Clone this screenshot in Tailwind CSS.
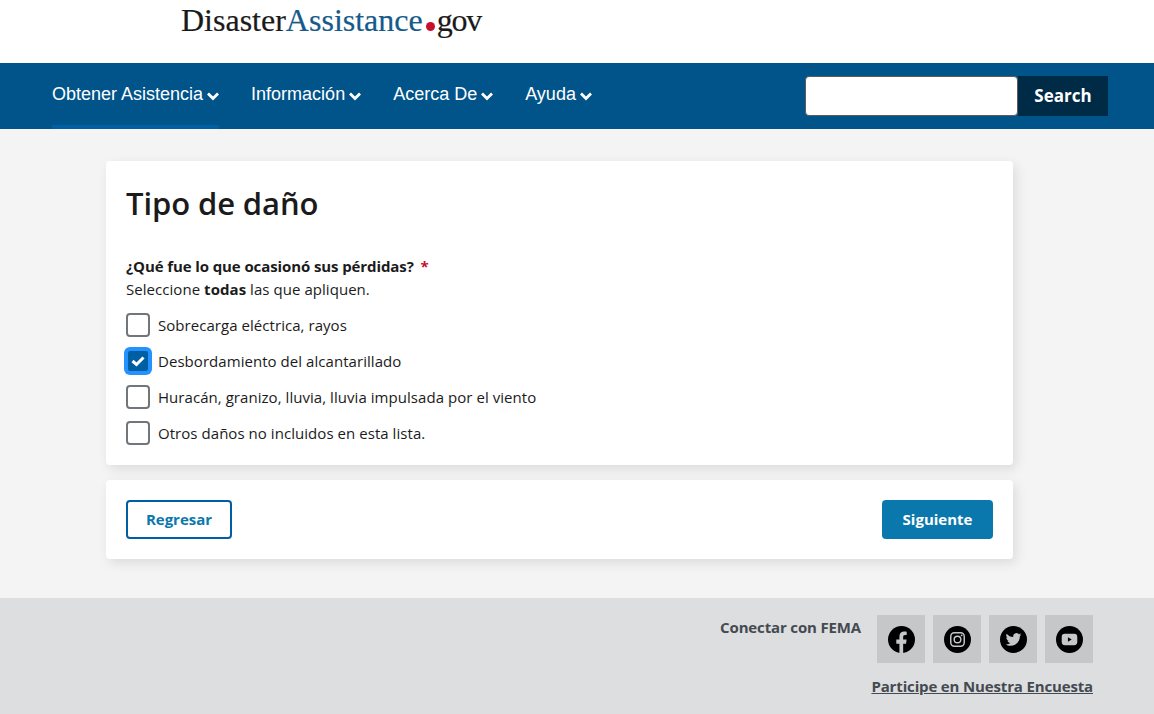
<!DOCTYPE html>
<html lang="es">
<head>
    <meta charset="UTF-8">
    <title>Tipo de daño</title>
    <script src="https://cdn.jsdelivr.net/npm/@tailwindcss/browser@4"></script>
</head>
<body class="h-[714px] overflow-hidden bg-[#f4f4f4] font-['Open_Sans',sans-serif] text-[#1b1b1b]">
    <!-- Logo -->
    <header class="h-[63px] bg-white pl-[181px] pt-[2px]">
        <div class="font-['Liberation_Serif',serif] text-[32px] leading-[36px] flex items-baseline [-webkit-text-stroke:0.2px]">
            <span class="text-[#1a1a1a]">Disaster</span><span class="text-[#155a8a]">Assistance</span><span class="w-[9px] h-[9px] rounded-full bg-[#c8102e] ml-[3px] mr-[2px]"></span><span class="text-[#1a1a1a] tracking-[-1.2px]">gov</span>
        </div>
    </header>

    <!-- Nav -->
    <nav class="h-[66px] bg-[#00548a] flex items-center justify-between pl-[52px] pr-[46px] text-white">
        <ul class="flex gap-[32px] font-['Liberation_Sans',sans-serif] text-[18px] h-full">
            <li class="relative flex items-center gap-[4px] pb-[4px]">Obtener Asistencia
                <svg class="w-[12px] h-[12px] mt-[3px]" viewBox="0 0 12 12" fill="none" stroke="white" stroke-width="2.800"><path d="M1 3.500 6 8.500l5-5"/></svg>
                <span class="absolute left-0 right-0 bottom-0 h-[4px] bg-[#005ea2]"></span>
            </li>
            <li class="flex items-center gap-[4px] pb-[4px]">Información
                <svg class="w-[12px] h-[12px] mt-[3px]" viewBox="0 0 12 12" fill="none" stroke="white" stroke-width="2.800"><path d="M1 3.500 6 8.500l5-5"/></svg>
            </li>
            <li class="flex items-center gap-[4px] pb-[4px]">Acerca De
                <svg class="w-[12px] h-[12px] mt-[3px]" viewBox="0 0 12 12" fill="none" stroke="white" stroke-width="2.800"><path d="M1 3.500 6 8.500l5-5"/></svg>
            </li>
            <li class="flex items-center gap-[4px] pb-[4px]">Ayuda
                <svg class="w-[12px] h-[12px] mt-[3px]" viewBox="0 0 12 12" fill="none" stroke="white" stroke-width="2.800"><path d="M1 3.500 6 8.500l5-5"/></svg>
            </li>
        </ul>
        <form class="flex h-[40px]">
            <input type="text" class="w-[213px] h-full bg-white border border-[#5c5c5c] rounded-[4px] outline-none">
            <button type="button" class="w-[90px] h-full bg-[#002b47] text-white font-bold text-[17px] pb-[1px]">Search</button>
        </form>
    </nav>

    <main class="h-[469px] pt-[32px] pl-[106px]">
        <section class="w-[907px] h-[304px] bg-white rounded-[4px] shadow-[3px_4px_12px_rgba(0,0,0,0.1)] px-[20px] pt-[21px]">
            <h1 class="text-[31px] leading-[42px] font-semibold tracking-[-0.1px]">Tipo de daño</h1>
            <p class="mt-[30px] text-[15px] leading-[24px] font-bold tracking-[-0.1px]">¿Qué fue lo que ocasionó sus pérdidas? <span class="text-[#c8102e] ml-[3px]">*</span></p>
            <p class="text-[15px] leading-[22px] tracking-[0.05px]">Seleccione <b>todas</b> las que apliquen.</p>
            <div class="mt-[13px] flex flex-col gap-[12px] text-[15px] tracking-[0.05px]">
                <label class="flex items-center gap-[8px] h-[24px]">
                    <span class="w-[24px] h-[24px] rounded-[4px] border-2 border-[#71767a] bg-white"></span>Sobrecarga eléctrica, rayos
                </label>
                <label class="flex items-center gap-[8px] h-[24px]">
                    <span class="w-[24px] h-[24px] rounded-[4px] bg-[#005ea2] border-2 border-[#2491ff] ring-[2px] ring-[#2491ff] flex items-center justify-center">
                        <svg class="w-[14px] h-[14px]" viewBox="0 0 14 14" fill="none" stroke="white" stroke-width="3"><path d="M1.500 7 5.500 10.500 12.500 3.500"/></svg>
                    </span>Desbordamiento del alcantarillado
                </label>
                <label class="flex items-center gap-[8px] h-[24px]">
                    <span class="w-[24px] h-[24px] rounded-[4px] border-2 border-[#71767a] bg-white"></span>Huracán, granizo, lluvia, lluvia impulsada por el viento
                </label>
                <label class="flex items-center gap-[8px] h-[24px]">
                    <span class="w-[24px] h-[24px] rounded-[4px] border-2 border-[#71767a] bg-white"></span>Otros daños no incluidos en esta lista.
                </label>
            </div>
        </section>
        <section class="mt-[15px] w-[907px] h-[79px] bg-white rounded-[4px] shadow-[3px_4px_12px_rgba(0,0,0,0.1)] px-[20px] flex items-center justify-between">
            <button type="button" class="w-[106px] h-[39px] border-2 border-[#005ea2] rounded-[4px] text-[#0b78ad] font-bold text-[15px] pb-[1px]">Regresar</button>
            <button type="button" class="w-[111px] h-[39px] bg-[#0b78ad] rounded-[4px] text-white font-bold text-[15px] pb-[1px]">Siguiente</button>
        </section>
    </main>

    <footer class="h-[116px] bg-[#dcdee0] pr-[61px] pt-[17px] flex flex-col items-end">
        <div class="flex gap-[16px]">
            <span class="text-[#444a50] font-bold text-[15px] leading-[24px] tracking-[-0.15px]">Conectar con FEMA</span>
            <div class="flex gap-[8px]">
                <a class="w-[48px] h-[48px] bg-[#c6c7c9] flex items-center justify-center">
                    <svg class="w-[27px] h-[27px]" viewBox="0 0 26 26"><circle cx="13" cy="13" r="13"/><path fill="#c6c7c9" d="M11 26v-9H8v-4h3v-3c0-3 1.800-4.600 4.500-4.600 1.300 0 2.500.2 2.500.2v3h-1.500c-1.400 0-1.900.9-1.900 1.800V13h3.300l-.5 4h-2.800v9z"/></svg>
                </a>
                <a class="w-[48px] h-[48px] bg-[#c6c7c9] flex items-center justify-center">
                    <svg class="w-[27px] h-[27px]" viewBox="0 0 26 26"><circle cx="13" cy="13" r="13"/><rect x="6.500" y="6.500" width="13" height="13" rx="3.500" fill="none" stroke="#c6c7c9" stroke-width="1.400"/><circle cx="13" cy="13" r="3.200" fill="none" stroke="#c6c7c9" stroke-width="1.400"/><circle cx="17" cy="9" r="0.900" fill="#c6c7c9"/></svg>
                </a>
                <a class="w-[48px] h-[48px] bg-[#c6c7c9] flex items-center justify-center">
                    <svg class="w-[27px] h-[27px]" viewBox="0 0 26 26"><circle cx="13" cy="13" r="13"/><path fill="#c6c7c9" d="M20.500 8.300c-.6.3-1.200.4-1.800.5.600-.4 1.100-1 1.400-1.700-.6.4-1.300.6-2 .8a3.100 3.100 0 0 0-5.300 2.800c-2.600-.1-4.900-1.400-6.400-3.300-.8 1.400-.4 3.200 1 4.100-.5 0-1-.1-1.400-.4 0 1.500 1.100 2.800 2.500 3.100-.5.100-.9.100-1.400.1.400 1.200 1.500 2.100 2.900 2.100a6.300 6.300 0 0 1-4.600 1.300c1.400.9 3 1.400 4.800 1.400 5.800 0 9-4.900 8.900-9.200.6-.5 1.100-1 1.400-1.600z"/></svg>
                </a>
                <a class="w-[48px] h-[48px] bg-[#c6c7c9] flex items-center justify-center">
                    <svg class="w-[27px] h-[27px]" viewBox="0 0 26 26"><circle cx="13" cy="13" r="13"/><rect x="5.500" y="7.500" width="15" height="11" rx="3" fill="#c6c7c9"/><path d="M11.500 10.800v4.400l3.600-2.200z"/></svg>
                </a>
            </div>
        </div>
        <a class="mt-[11px] text-[#444a50] font-bold text-[15px] leading-[24px] tracking-[-0.15px] underline">Participe en Nuestra Encuesta</a>
    </footer>
</body>
</html>
